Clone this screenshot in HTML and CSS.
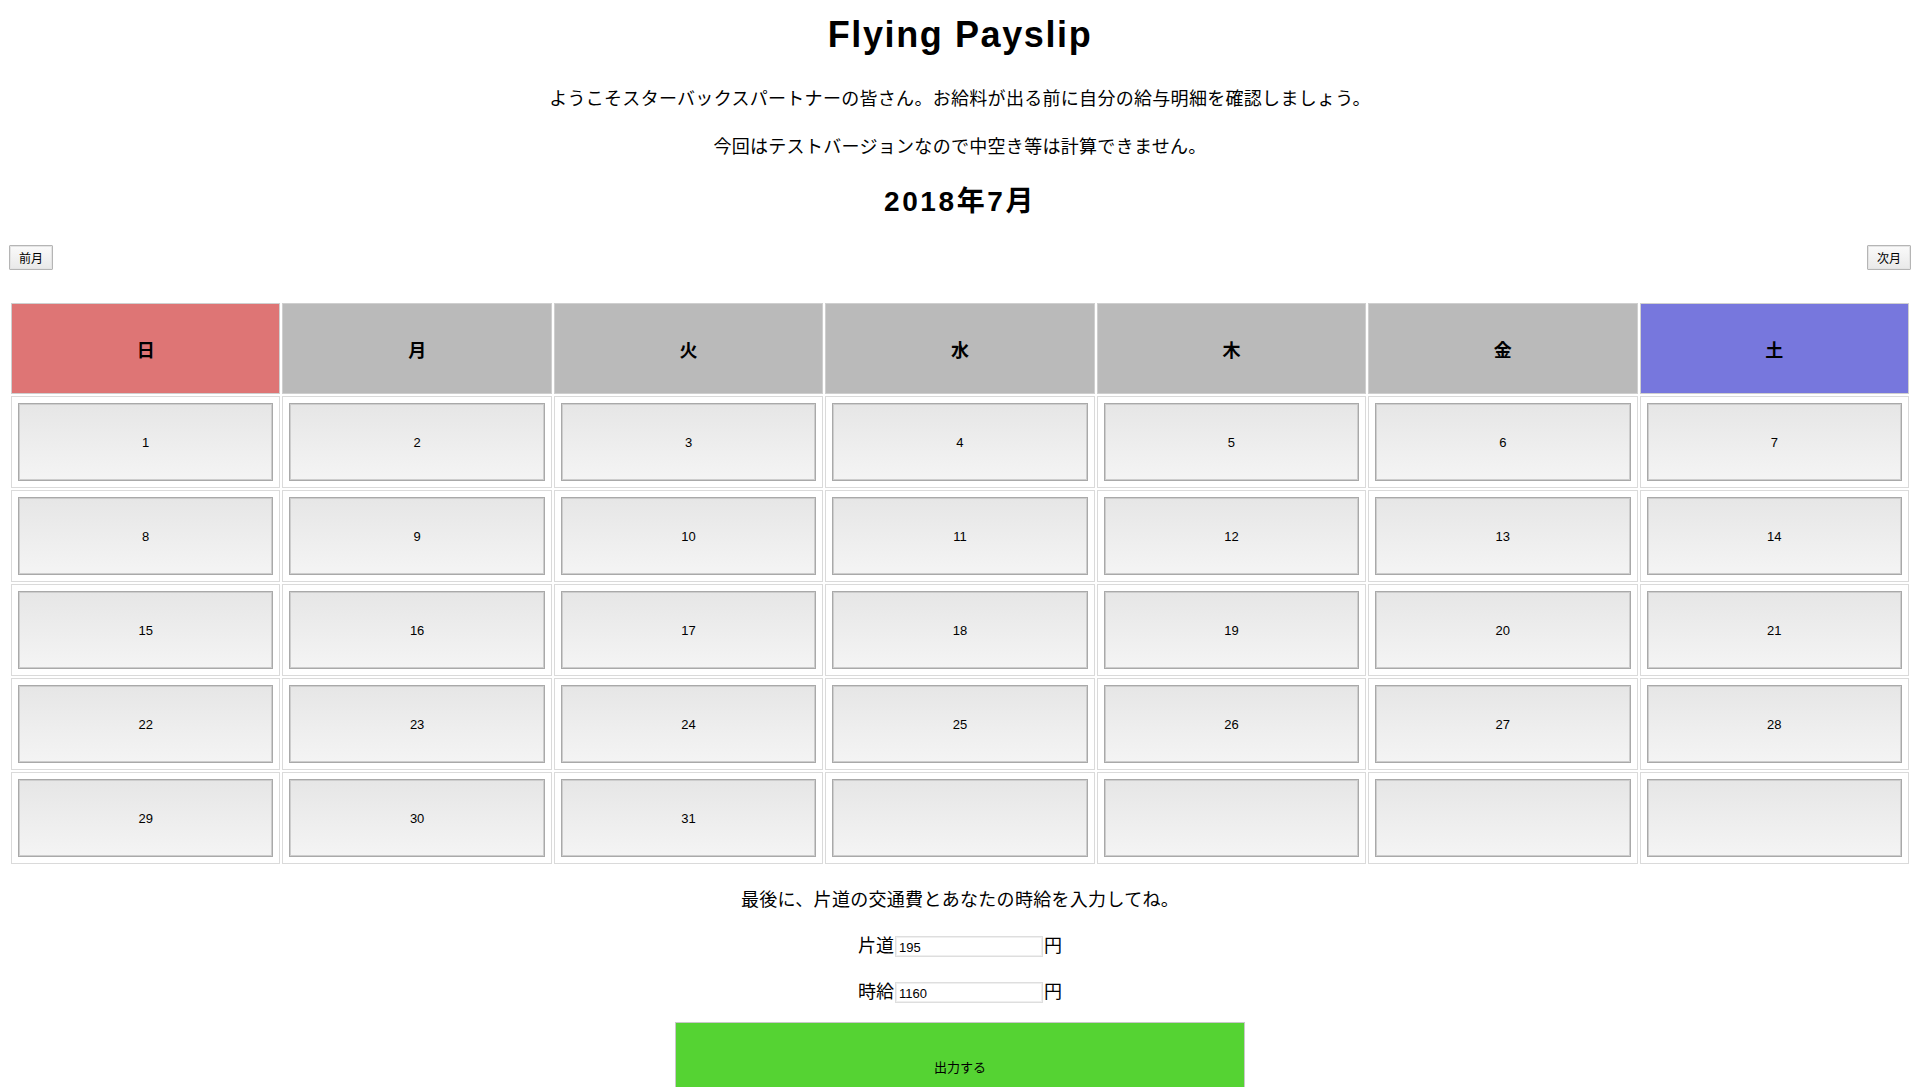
FILE: index.html
```html
<!DOCTYPE html>
<html lang="ja">
<head>
<meta charset="utf-8">
<title>Flying Payslip</title>
<link rel="stylesheet" href="styles.css">
</head>
<body>
<div class="page">
  <h1 class="title">Flying Payslip</h1>
  <p class="intro first">ようこそスターバックスパートナーの皆さん。お給料が出る前に自分の給与明細を確認しましょう。</p>
  <p class="intro">今回はテストバージョンなので中空き等は計算できません。</p>
  <h2 class="month">2018年7月</h2>
  <div class="nav">
    <button class="nav-btn">前月</button>
    <button class="nav-btn">次月</button>
  </div>
  <table class="cal">
    <thead>
      <tr>
        <th class="sun">日</th><th>月</th><th>火</th><th>水</th><th>木</th><th>金</th><th class="sat">土</th>
      </tr>
    </thead>
    <tbody>
      <tr>
        <td><button class="day">1</button></td><td><button class="day">2</button></td><td><button class="day">3</button></td><td><button class="day">4</button></td><td><button class="day">5</button></td><td><button class="day">6</button></td><td><button class="day">7</button></td>
      </tr>
      <tr>
        <td><button class="day">8</button></td><td><button class="day">9</button></td><td><button class="day">10</button></td><td><button class="day">11</button></td><td><button class="day">12</button></td><td><button class="day">13</button></td><td><button class="day">14</button></td>
      </tr>
      <tr>
        <td><button class="day">15</button></td><td><button class="day">16</button></td><td><button class="day">17</button></td><td><button class="day">18</button></td><td><button class="day">19</button></td><td><button class="day">20</button></td><td><button class="day">21</button></td>
      </tr>
      <tr>
        <td><button class="day">22</button></td><td><button class="day">23</button></td><td><button class="day">24</button></td><td><button class="day">25</button></td><td><button class="day">26</button></td><td><button class="day">27</button></td><td><button class="day">28</button></td>
      </tr>
      <tr>
        <td><button class="day">29</button></td><td><button class="day">30</button></td><td><button class="day">31</button></td><td><button class="day"></button></td><td><button class="day"></button></td><td><button class="day"></button></td><td><button class="day"></button></td>
      </tr>
    </tbody>
  </table>
  <p class="note">最後に、片道の交通費とあなたの時給を入力してね。</p>
  <div class="field"><span class="label">片道</span><input class="num" type="text" value="195"><span class="unit">円</span></div>
  <div class="field"><span class="label">時給</span><input class="num" type="text" value="1160"><span class="unit">円</span></div>
  <div class="submit-wrap"><button class="submit">出力する</button></div>
</div>
</body>
</html>
```

FILE: styles.css
```css
html, body {
  margin: 0;
  padding: 0;
  background: #ffffff;
}
body {
  font-family: "Liberation Sans", "Noto Sans CJK JP", sans-serif;
  color: #000;
  overflow: hidden;
}
.page {
  padding: 0 9px;
}
.title {
  margin: 13px 0 0;
  font-size: 36px;
  line-height: 44px;
  font-weight: bold;
  letter-spacing: 1.6px;
  text-align: center;
}
.intro {
  margin: 18px 0 0;
  font-size: 18px;
  line-height: 30px;
  letter-spacing: 0.3px;
  text-align: center;
}
.intro.first {
  margin-top: 27px;
}
.month {
  margin: 22px 0 0;
  font-size: 28px;
  line-height: 36px;
  font-weight: bold;
  letter-spacing: 2.6px;
  text-align: center;
}
.nav {
  margin-top: 25px;
  display: flex;
  justify-content: space-between;
}
.nav-btn {
  height: 25px;
  padding: 0 9px;
  font-family: "Liberation Sans", "Noto Sans CJK JP", sans-serif;
  font-size: 12px;
  color: #000;
  background: linear-gradient(#fafafa, #e9e9e9);
  border: 1px solid #b5b5b5;
  box-shadow: inset 0 0 0 1px #e4e4e4;
  border-radius: 1px;
}
.cal {
  margin-top: 31px;
  width: 100%;
  table-layout: fixed;
  border-collapse: separate;
  border-spacing: 2px;
}
.cal th {
  height: 89px;
  padding: 0;
  border: 1px solid #cfcfcf;
  background: #bababa;
  font-size: 18px;
  font-weight: bold;
  text-align: center;
}
.cal th.sun {
  background: #de7575;
}
.cal th.sat {
  background: #7777dd;
}
.cal td {
  height: 78px;
  padding: 6px;
  border: 1px solid #dadada;
  background: #fff;
}
.day {
  display: block;
  width: 100%;
  height: 78px;
  margin: 0;
  padding: 0;
  font-family: "Liberation Sans", "Noto Sans CJK JP", sans-serif;
  font-size: 13px;
  color: #000;
  background: linear-gradient(#e6e6e6, #f4f4f4);
  border: 1px solid #a9a9a9;
  box-shadow: inset 0 0 0 1px #cdcdcd;
}
.note {
  margin: 21px 0 0;
  font-size: 18px;
  line-height: 27px;
  letter-spacing: 0.3px;
  text-align: center;
}
.field {
  margin-top: 18px;
  height: 28px;
  display: flex;
  justify-content: center;
  align-items: center;
  font-size: 18px;
}
.label, .unit {
  line-height: 28px;
}
.num {
  box-sizing: border-box;
  width: 148px;
  height: 21px;
  margin: 0 1px 0 1px;
  padding: 2px 3px 0;
  font-family: "Liberation Sans", "Noto Sans CJK JP", sans-serif;
  font-size: 13px;
  color: #000;
  border: 1px solid #dedede;
  box-shadow: inset 0 0 0 1px #efefef;
  background: #fff;
  outline: none;
}
.submit-wrap {
  margin-top: 16px;
  display: flex;
  justify-content: center;
}
.submit {
  width: 570px;
  height: 88px;
  font-family: "Liberation Sans", "Noto Sans CJK JP", sans-serif;
  font-size: 13px;
  color: #000;
  background: #55d333;
  border: 1px solid #c8c8c8;
  padding: 0;
}
```
